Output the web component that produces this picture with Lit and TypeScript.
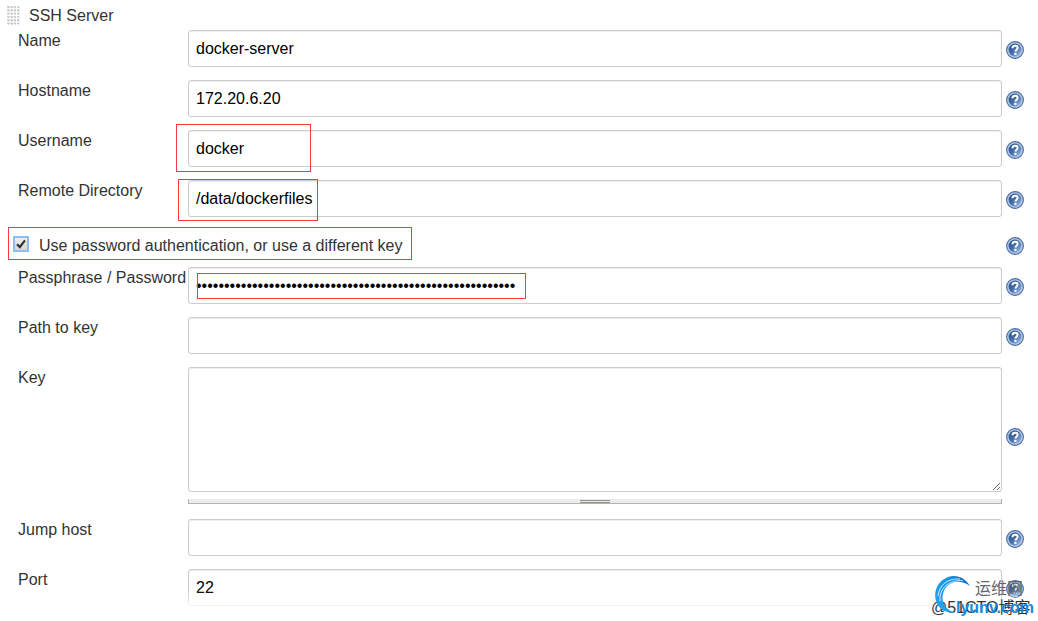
import { LitElement, html, css, nothing } from "lit";
import { customElement, property } from "lit/decorators.js";

@customElement("help-button")
class HelpButton extends LitElement {
  @property() topic = "";
  static styles = css`
    :host { display: block; width: 18px; height: 18px; }
    .help { display: block; width: 18px; height: 18px; padding: 0; border: 0; background: none; cursor: pointer; }
    svg { display: block; }
  `;
  render() {
    return html`<button class="help" type="button" aria-label="Help for feature: ${this.topic}">
      <svg width="18" height="18" viewBox="0 0 18 18">
        <defs>
          <linearGradient id="face" x1="0" y1="0" x2="1" y2="1">
            <stop offset="0" stop-color="#1f4a8c" />
            <stop offset=".5" stop-color="#4870aa" />
            <stop offset="1" stop-color="#a9c6ea" />
          </linearGradient>
        </defs>
        <circle cx="9" cy="9" r="8.4" fill="#b4c8e4" stroke="#4a6da1" stroke-width="1.1" />
        <circle cx="9" cy="9" r="6.4" fill="url(#face)" />
        <path d="M6.4 7.2C6.5 5.5 7.5 4.7 9.1 4.7c1.6 0 2.5.8 2.5 2.1 0 1.8-2.2 1.9-2.2 3.8" fill="none" stroke="#fff" stroke-width="2" />
        <rect x="8.3" y="11.8" width="2.2" height="2.1" fill="#fff" />
      </svg>
    </button>`;
  }
}

interface Field {
  id: string;
  label: string;
  value: string;
  type?: string;
  mark?: string;
}

@customElement("app-root")
class AppRoot extends LitElement {
  static styles = css`
    :host {
      display: block;
      font: 16px/20px "Liberation Sans", Arial, sans-serif;
      color: #333;
      background: #fff;
    }
    * { box-sizing: border-box; }
    .title { display: flex; align-items: center; gap: 9px; height: 30px; padding: 1px 7px 0; }
    .grip { display: block; }
    .row {
      display: grid;
      grid-template-columns: 170px minmax(0, 1fr) 22px;
      padding: 0 14px 13px 18px;
    }
    .row help-button { margin: 2px 0 0 4px; align-self: center; }
    .label { padding-top: 1px; white-space: nowrap; }
    .control { position: relative; }
    .box {
      display: block;
      width: 100%;
      height: 37px;
      margin: 0;
      padding: 0 7px;
      border: 1px solid #ccc;
      border-radius: 3px;
      background: #fff;
      box-shadow: inset 0 1px 1px rgba(0, 0, 0, 0.075);
      color: #000;
      font: inherit;
      outline: none;
    }
    .area { height: 125px; resize: vertical; }
    .key { padding-bottom: 15px; }
    .handle {
      display: flex;
      flex-direction: column;
      align-items: center;
      height: 5px;
      margin-top: 7px;
      padding-top: 1px;
      border: 1px solid #b5b5b0;
      border-top: 0;
      background: #ececec;
    }
    .grab { width: 30px; height: 3px; border: solid #8f9283; border-width: 1px 0; background: #ececec; }
    .check { position: relative; display: flex; align-items: center; height: 37px; padding: 0 14px 5px 13px; }
    .check label { flex: 1; padding-left: 10px; }
    .tick { position: relative; flex: none; display: block; width: 16px; height: 16px; margin-bottom: 4px; }
    .tick input {
      appearance: none;
      display: block;
      width: 16px;
      height: 16px;
      margin: 0;
      border: 2px solid #92bbf6;
      outline: none;
      background: linear-gradient(#eee, #d6d6d6);
    }
    .tick svg { position: absolute; left: 3px; top: 3px; display: none; pointer-events: none; }
    .tick input:checked + svg { display: block; }

    .mark { position: absolute; border: 1px solid #f93a3a; pointer-events: none; }
    .user { left: -12px; top: -6px; width: 135px; height: 48px; }
    .remote { left: -10px; top: -1px; width: 140px; height: 42px; }
    .secret { left: 9px; top: 6px; width: 329px; height: 26px; }
    .auth { left: 8px; top: -3px; width: 404px; height: 33px; }

    .last { position: relative; padding-bottom: 15px; }
    .fade {
      position: absolute;
      inset: 22px 0 0;
      background: linear-gradient(rgba(255, 255, 255, 0), rgba(255, 255, 255, 0.75) 15px);
      pointer-events: none;
    }
    .stamp { position: absolute; right: 6px; top: 4px; width: 101px; height: 42px; pointer-events: none; white-space: nowrap; }
    .stamp span { position: absolute; }
    .ring { position: absolute; left: 3px; top: 1px; }
    .blog { left: 0; top: 25px; color: #333; font: 16px/20px "Liberation Sans", "Noto Sans CJK SC", sans-serif; }
    .brand { left: 44px; top: 4px; color: #626770; font: 16px/20px "Noto Sans CJK SC", sans-serif; }
    .site { left: 25px; top: 25px; color: #168be0; font: bold 16px/20px "Liberation Sans", Arial, sans-serif; }
  `;

  private above: Field[] = [
    { id: "name", label: "Name", value: "docker-server" },
    { id: "hostname", label: "Hostname", value: "172.20.6.20" },
    { id: "username", label: "Username", value: "docker", mark: "mark user" },
    { id: "remote", label: "Remote Directory", value: "/data/dockerfiles", mark: "mark remote" },
  ];

  private below: Field[] = [
    { id: "pass", label: "Passphrase / Password", value: "x".repeat(57), type: "password", mark: "mark secret" },
    { id: "path", label: "Path to key", value: "" },
  ];

  private cells(f: Field) {
    return html`<label class="label" for=${f.id}>${f.label}</label>
      <div class="control">
        <input class="box" id=${f.id} type=${f.type ?? "text"} .value=${f.value} />
        ${f.mark ? html`<span class=${f.mark}></span>` : nothing}
      </div>
      <help-button topic=${f.label}></help-button>`;
  }

  private field(f: Field) {
    return html`<div class="row">${this.cells(f)}</div>`;
  }

  render() {
    return html`<div class="title">
        <svg class="grip" width="13" height="20" viewBox="0 0 13 20" aria-hidden="true">
          <defs>
            <pattern id="dots" width="3.3" height="3.3" patternUnits="userSpaceOnUse">
              <rect width="2.3" height="1.6" fill="#d2d0cc" />
              <rect x="1" y="1" width="1.3" height="1" fill="#aaa8a4" />
            </pattern>
          </defs>
          <rect width="13" height="20" fill="url(#dots)" />
        </svg>
        <span>SSH Server</span>
      </div>
      ${this.above.map((f) => this.field(f))}
      <div class="check">
        <span class="tick">
          <input type="checkbox" id="auth" checked />
          <svg width="10" height="10" viewBox="0 0 10 10"><path d="M1 5.2 3.8 8 9 1.4" fill="none" stroke="#333" stroke-width="2.2" /></svg>
        </span>
        <label for="auth">Use password authentication, or use a different key</label>
        <help-button topic="Use password authentication, or use a different key"></help-button>
        <span class="mark auth"></span>
      </div>
      ${this.below.map((f) => this.field(f))}
      <div class="row key">
        <label class="label" for="key">Key</label>
        <div class="control">
          <textarea class="box area" id="key"></textarea>
          <div class="handle"><span class="grab"></span></div>
        </div>
        <help-button topic="Key"></help-button>
      </div>
      ${this.field({ id: "jump", label: "Jump host", value: "" })}
      <div class="row last">
        ${this.cells({ id: "port", label: "Port", value: "22" })}
        <div class="fade"></div>
        <div class="stamp">
          <span class="blog">@51CTO博客</span>
          <svg class="ring" width="40" height="42" viewBox="0 0 40 42" aria-hidden="true">
            <defs>
              <linearGradient id="sweep" x1="0" y1="1" x2="1" y2="0">
                <stop offset="0" stop-color="#27a5ee" />
                <stop offset=".6" stop-color="#159ae8" />
                <stop offset="1" stop-color="#0c62b4" />
              </linearGradient>
            </defs>
            <path d="M36 12C31 3 22 0 14 3 4 7-1 17 2 27c2 7 8 12 19 12C11 35 7 28 9 20 11 10 23 3 36 12Z" fill="url(#sweep)" />
            <path d="M4 22C5 11 14 4 26 5M6 27C5 14 15 6 29 6.500" fill="none" stroke="#fff" stroke-width=".8" />
          </svg>
          <span class="brand">运维网</span>
          <span class="site">lyunv.com</span>
        </div>
      </div>`;
  }
}
